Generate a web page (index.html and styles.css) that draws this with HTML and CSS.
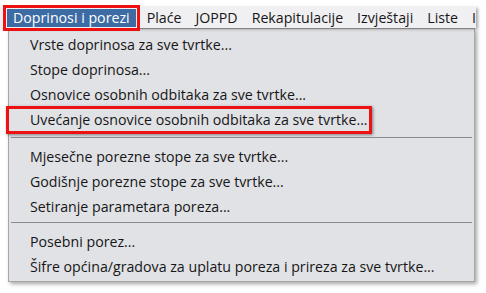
FILE: index.html
```html
<!DOCTYPE html>
<html>
<head>
<meta charset="utf-8">
<link rel="stylesheet" href="styles.css">
</head>
<body>
  <div class="menubar">
    <span class="top active">Doprinosi i porezi</span>
    <span class="top">Plaće</span>
    <span class="top">JOPPD</span>
    <span class="top">Rekapitulacije</span>
    <span class="top">Izvještaji</span>
    <span class="top">Liste</span>
    <span class="top">I</span>
  </div>
  <div class="dropdown">
    <div class="item">Vrste doprinosa za sve tvrtke...</div>
    <div class="item">Stope doprinosa...</div>
    <div class="item">Osnovice osobnih odbitaka za sve tvrtke...</div>
    <div class="item marked">Uvećanje osnovice osobnih odbitaka za sve tvrtke...</div>
    <div class="sep"></div>
    <div class="item">Mjesečne porezne stope za sve tvrtke...</div>
    <div class="item">Godišnje porezne stope za sve tvrtke...</div>
    <div class="item">Setiranje parametara poreza...</div>
    <div class="sep"></div>
    <div class="item">Posebni porez...</div>
    <div class="item">Šifre općina/gradova za uplatu poreza i prireza za sve tvrtke...</div>
  </div>
</body>
</html>
```
FILE: styles.css
```css
html, body {
  margin: 0;
  padding: 0;
  background: #ffffff;
  width: 486px;
  height: 293px;
  overflow: hidden;
}
body {
  font-family: "Open Sans", "Noto Sans", sans-serif;
  font-size: 14.2px;
  color: #161616;
}
.menubar {
  width: 476px;
  height: 21px;
  margin-top: 7px;
  display: flex;
  align-items: flex-start;
  padding-top: 2px;
  box-sizing: border-box;
  padding-left: 7px;
  background: #f0f0f2;
  overflow: visible;
  white-space: nowrap;
  box-shadow: 2px 1px 3px rgba(0,0,0,0.35);
  position: relative;
  z-index: 1;
}
.top {
  height: 18px;
  line-height: 18px;
  padding: 0 7px;
}
.top.active {
  background: #3d6ba3;
  color: #ffffff;
  padding: 0 6px;
  margin-right: 4px;
  outline: 3px solid #ee1111;
  outline-offset: 1px;
}
.dropdown {
  margin-left: 8px;
  width: 467px;
  box-sizing: border-box;
  background: #e1e2e6;
  border: 1px solid #a6a6a6;
  padding: 3px 2px 2px 2px;
  box-shadow: 2px 2px 4px rgba(0,0,0,0.35);
}
.item {
  height: 25px;
  line-height: 25px;
  padding-left: 19px;
  white-space: nowrap;
}
.item.marked {
  margin-left: -5px;
  padding-left: 21px;
  width: 339px;
  border: 3px solid #ee1111;
  height: 22px;
  line-height: 22px;
  margin-top: -1px;
  margin-bottom: 2px;
  box-shadow: 1px 1px 3px rgba(0,0,0,0.45);
}
.sep {
  height: 1px;
  background: #8a8a8a;
  margin: 3px 0 6px 0;
}
```
